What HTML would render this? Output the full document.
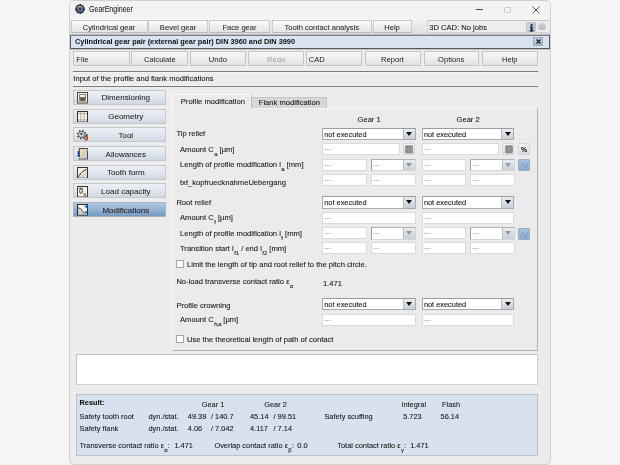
<!DOCTYPE html>
<html><head><meta charset="utf-8"><style>
*{margin:0;padding:0;box-sizing:border-box}
html,body{width:620px;height:465px;overflow:hidden;background:#f5f5f5;font-family:"Liberation Sans",sans-serif;color:#161616}
#root{position:absolute;left:0;top:0;width:620px;height:465px;will-change:transform;overflow:hidden}
.a{position:absolute}
.t{position:absolute;white-space:nowrap;font-size:7.6px;line-height:10px;-webkit-text-stroke:0.08px currentColor;}
.cmb{-webkit-text-stroke:0.08px currentColor;}
.nav{-webkit-text-stroke:0.05px currentColor}
.tab{position:absolute;top:20px;height:13px;border:1px solid #c9c9c9;border-bottom-color:#b9b9b9;background:linear-gradient(#fbfbfb,#e4e4e4);text-align:center;font-size:7.6px;line-height:13px;color:#1e1e1e;-webkit-text-stroke:0.04px currentColor}
.btn{position:absolute;top:51.3px;height:15px;border:1px solid #c4c4c4;border-radius:1px;background:linear-gradient(#f7f7f7,#e3e3e3);font-size:7.6px;line-height:15px;color:#202020;text-align:center}
.nav{position:absolute;left:73px;width:92.6px;height:15px;border:1px solid #c3c8cf;background:linear-gradient(#edf1f6 0%,#dde4ec 60%,#cfd7e1 100%);font-size:8px;line-height:14px;color:#1c1c1c}
.nav span{position:absolute;left:13px;right:0;text-align:center}
.nav.sel{background:linear-gradient(#b3cbe3,#7599c0);border-color:#a9b3be}
.ico{position:absolute;left:3px;top:1px}
.fld{position:absolute;height:12px;background:#fff;border:1px solid #dadada;font-size:6.6px;line-height:10.5px;color:#8f8f8f;padding-left:1.3px;letter-spacing:0px}
.cmb{position:absolute;height:12.5px;background:#fff;border:1px solid #aaaaaa;border-top-color:#9c9c9c;font-size:7.4px;line-height:11px;color:#111;padding-left:1.2px}
.cmb .ar{position:absolute;right:0;top:0;width:12px;height:10.5px;background:linear-gradient(#e9edf2,#c8d0da);border-left:1px solid #b3bcc7}
.cmb .ar:after{content:"";position:absolute;left:2.5px;top:3px;border-left:3.5px solid transparent;border-right:3.5px solid transparent;border-top:4px solid #111}
.cmb.dis{border-color:#b4b4b4 #d6d6d6 #d6d6d6 #9c9c9c;color:#8f8f8f;font-size:6.6px;line-height:10.5px;padding-left:1.3px;-webkit-text-stroke:0}
.cmb.dis .ar:after{border-top-color:#8f99a6}
.sq{position:absolute;width:12px;height:12px;border:1px solid #d2d6db;border-radius:1px;background:linear-gradient(#f3f5f7,#d5dbe2)}
.chk{position:absolute;width:7.5px;height:7.5px;border:1px solid #a5a5a5;background:#fff}
sub{font-size:5.9px;vertical-align:-4px;line-height:0;margin-left:0.4px}
</style></head><body><div id="root">
<div class="a" style="left:69px;top:0;width:482px;height:465px;border:1px solid #d0d0d0;border-radius:5px;background:#ececec;overflow:hidden"><div class="a" style="left:0;top:0;width:480px;height:20px;background:#f3f3f3"></div><div class="a" style="left:0;top:20px;width:480px;height:14px;background:linear-gradient(#efefef,#dfdfdf)"></div></div>
<svg class="a" style="left:75px;top:4px" width="10" height="10" viewBox="0 0 10 10">
<rect x="0" y="0" width="10" height="10" fill="#dfe7f2"/>
<circle cx="5" cy="5" r="4.6" fill="#2b2b2d"/>
<path d="M5 0.2l0.9 1.2M5 9.8l0.9-1.2M0.2 5l1.2 0.9M9.8 5l-1.2 0.9" stroke="#2b2b2d" stroke-width="1.2"/>
<circle cx="5" cy="5" r="3.2" fill="#6e747c"/>
<path d="M2.6 3.2 Q5 1.6 7.4 3.2" stroke="#b8bcc2" stroke-width="0.9" fill="none"/>
<path d="M2.5 6.2 Q5 9 7.5 6.2 L6 5.2 L4 5.2z" fill="#2f66c4"/>
<circle cx="5" cy="4.6" r="0.9" fill="#1e1e1e"/>
</svg>
<div class="t" style="left:88.5px;top:4.1px;font-size:8.8px;color:#262626;transform:scaleX(0.80);transform-origin:0 0">GearEngineer</div>
<div class="a" style="left:476px;top:9px;width:6.5px;height:1px;background:#444"></div>
<div class="a" style="left:504px;top:6.5px;width:6.5px;height:6.5px;border:1px solid #cfcfcf;border-radius:1px"></div>
<svg class="a" style="left:532px;top:6px" width="8" height="8" viewBox="0 0 8 8"><path d="M0.6 0.6L7.4 7.4M7.4 0.6L0.6 7.4" stroke="#3a3a3a" stroke-width="0.85"/></svg>
<div class="tab" style="left:70.5px;width:77px">Cylindrical gear</div>
<div class="tab" style="left:148px;width:60px">Bevel gear</div>
<div class="tab" style="left:209px;width:61px">Face gear</div>
<div class="tab" style="left:271.5px;width:100.5px">Tooth contact analysis</div>
<div class="tab" style="left:372.5px;width:39px">Help</div>
<div class="a" style="left:427px;top:20px;width:122px;height:13px;border:1px solid #d2d2d2;border-top-color:#c6c6c6;border-right:none;background:#ededed"></div>
<div class="t" style="left:429.2px;top:23px;">3D CAD: No jobs</div>
<div class="a" style="left:526px;top:22.3px;width:9.5px;height:9.5px;background:linear-gradient(90deg,#d0dcea,#a8bcd6);border:1px solid #b9c6d6;border-radius:1px"></div>
<svg class="a" style="left:526.5px;top:22.5px" width="9" height="9" viewBox="0 0 9 9"><circle cx="4.6" cy="1.9" r="1" fill="#111"/><path d="M2.9 3.6h2.6v3.9h1.1v0.9H2.6V7.5h1.1V4.5h-0.8z" fill="#111"/></svg>
<div class="a" style="left:538px;top:22.7px;width:7.8px;height:7.8px;border-radius:50%;background:linear-gradient(#d4d4d4,#b9b9b9)"></div>
<div class="a" style="left:70px;top:33.6px;width:480px;height:1.4px;background:#b9b9b9"></div>
<div class="a" style="left:70px;top:35px;width:480px;height:14px;border:1px solid #54585f;border-top-color:#7d8187;background:#d9e4f0"></div>
<div class="a" style="left:70px;top:48.5px;width:480px;height:0.8px;background:#c4c4c4"></div>
<div class="t" style="left:75px;top:36.8px;font-weight:bold;font-size:7.35px;color:#101010;-webkit-text-stroke:0">Cylindrical gear pair (external gear pair) DIN 3960 and DIN 3990</div>
<div class="a" style="left:533px;top:37.3px;width:10px;height:9px;background:linear-gradient(#c4d2e3,#aebfd3);border:1px solid #9aabc0"></div>
<svg class="a" style="left:535.5px;top:39.3px" width="5" height="5" viewBox="0 0 5 5"><path d="M0.5 0.5L4.5 4.5M4.5 0.5L0.5 4.5" stroke="#1a1a1a" stroke-width="1.15"/></svg>
<div class="btn" style="left:73.3px;width:56.5px;text-align:left;padding-left:2px">File</div>
<div class="btn" style="left:131.3px;width:57px;">Calculate</div>
<div class="btn" style="left:189.7px;width:56.3px;">Undo</div>
<div class="btn" style="left:248.3px;width:55.8px;color:#9c9c9c">Redo</div>
<div class="btn" style="left:305.8px;width:56.2px;text-align:left;padding-left:2px">CAD</div>
<div class="btn" style="left:364.5px;width:56px;">Report</div>
<div class="btn" style="left:423.7px;width:55px;">Options</div>
<div class="btn" style="left:482px;width:55.5px;">Help</div>
<div class="a" style="left:73px;top:70.8px;width:465px;height:1.2px;background:#7c7c7c"></div>
<div class="a" style="left:73px;top:72px;width:465px;height:1px;background:#f4f4f4"></div>
<div class="t" style="left:73.3px;top:73.8px;">Input of the profile and flank modifications</div>
<div class="a" style="left:73px;top:84.6px;width:465px;height:1px;background:#f4f4f4"></div>
<div class="a" style="left:73px;top:85.6px;width:465px;height:1.2px;background:#7c7c7c"></div>
<div class="nav" style="top:89.9px"><svg class="ico" style="left:3px;top:1.2px" width="11" height="11.5" viewBox="0 0 11 11.5"><rect x="0.5" y="0.5" width="10" height="10.5" fill="#efeee4" stroke="#4d4c48" stroke-width="1"/>
<rect x="2" y="2" width="7" height="7.5" fill="#8c8474"/><rect x="3" y="3" width="5" height="2" fill="#f5f3ea"/>
<path d="M3 6.3h5M3 8h5M4.7 5.5v3.5M6.3 5.5v3.5" stroke="#4a453c" stroke-width="0.7"/></svg><span style="top:0.6px">Dimensioning</span></div>
<div class="nav" style="top:108.6px"><svg class="ico" style="left:3px;top:1.2px" width="11" height="11.5" viewBox="0 0 11 11.5"><rect x="0.5" y="0.5" width="10" height="10.5" fill="#f7f5e6" stroke="#333" stroke-width="1"/>
<path d="M3.8 1v9.5M7.2 1v9.5M1 2.6h9M1 8.9h9" stroke="#a08c8c" stroke-width="0.7"/></svg><span style="top:0.6px">Geometry</span></div>
<div class="nav" style="top:127.3px"><svg class="ico" style="left:3px;top:1.2px" width="11" height="11.5" viewBox="0 0 11 11.5"><g transform="translate(4.6 5.5)"><circle r="4" fill="none" stroke="#3a3a3a" stroke-width="1.6" stroke-dasharray="1.4 1.74"/>
<circle r="3.4" fill="#6a6a6a"/><circle r="2.6" fill="#dcdcd4"/><path d="M-2.2 1.2 A2.6 2.6 0 0 0 2.2 1.2" fill="none" stroke="#8a8a8a" stroke-width="0.8"/><circle cx="-0.2" cy="-0.5" r="1.1" fill="#262626"/></g>
<rect x="7.6" y="5" width="3" height="6.2" fill="#4a3a4a"/><rect x="8.7" y="6.5" width="1.9" height="4.7" fill="#d24a1a"/><rect x="7.6" y="4.6" width="1.6" height="1.8" fill="#8fb0e0"/><rect x="8" y="8" width="1" height="2.2" fill="#e8c060"/></svg><span style="top:0.6px">Tool</span></div>
<div class="nav" style="top:146px"><svg class="ico" style="left:3px;top:1.2px" width="11" height="11.5" viewBox="0 0 11 11.5"><rect x="2.2" y="0.5" width="8.3" height="10.5" fill="#d9c8b0" stroke="#3a3a3a" stroke-width="0.9"/>
<rect x="3" y="1.2" width="3.5" height="9" fill="#f0d8a8"/><rect x="6.5" y="1.2" width="3.5" height="9" fill="#d8c8d8"/>
<path d="M3 10.3 L10 1.3" stroke="#e8e8e0" stroke-width="2.2"/><path d="M3 10.3 L10 1.3" stroke="#6a6a60" stroke-width="0.5"/>
<rect x="0.6" y="3" width="2" height="6" fill="#1d4c90"/><path d="M0.6 3 L1.6 0.8 L2.6 3z" fill="#c8a868"/><rect x="0.6" y="9" width="2" height="1.2" fill="#e0e0d8"/></svg><span style="top:0.6px">Allowances</span></div>
<div class="nav" style="top:164.7px"><svg class="ico" style="left:3px;top:1.2px" width="11" height="11.5" viewBox="0 0 11 11.5"><rect x="0.5" y="0.5" width="10" height="10.5" fill="#f3f1e2" stroke="#333" stroke-width="1"/>
<path d="M1.5 10 Q3 5 9.8 2.2" fill="none" stroke="#555" stroke-width="1"/><path d="M2.6 7.2l1.4 0.6M4 5.2l1.2 1M5.8 3.8l0.9 1.2M7.8 2.9l0.6 1.3" stroke="#555" stroke-width="0.9"/>
<path d="M2.5 10.5 Q5 6 10 4.5 V10.5z" fill="#d8d8d0"/></svg><span style="top:0.6px">Tooth form</span></div>
<div class="nav" style="top:183.4px"><svg class="ico" style="left:3px;top:1.2px" width="11" height="11.5" viewBox="0 0 11 11.5"><rect x="0.5" y="0.5" width="10" height="10.5" fill="#f3f1e2" stroke="#3a3a3a" stroke-width="1"/>
<path d="M2 2.3h4M3.8 2.3 Q1.8 4.5 3 7 Q4.5 8.5 5.5 6 Q5.8 3.6 3.8 2.3" fill="none" stroke="#404040" stroke-width="0.9"/><path d="M6.5 7.5l2.6 2.2M9.1 7.5l-2.6 2.2" stroke="#404040" stroke-width="0.9"/></svg><span style="top:0.6px">Load capacity</span></div>
<div class="nav sel" style="top:202px"><svg class="ico" style="left:3px;top:1.2px" width="11" height="11.5" viewBox="0 0 11 11.5"><rect x="0.5" y="0.5" width="10" height="10.5" fill="#f4f3ea" stroke="#2a2a2a" stroke-width="1"/>
<path d="M1 4 Q5 4.5 6.5 9 L10 9 V10.5 H1z" fill="#cfcfc8"/><path d="M1.2 3.6 Q5.2 4.6 6.8 9" fill="none" stroke="#333" stroke-width="0.8"/>
<path d="M6.8 9h2.5" stroke="#777" stroke-width="0.6"/>
<circle cx="9" cy="2.6" r="1.3" fill="#2a7ae0"/><circle cx="9" cy="8.3" r="1.3" fill="#2a7ae0"/></svg><span style="top:0.9px">Modifications</span></div>
<div class="a" style="left:172px;top:108px;width:366px;height:243px;border:1px solid #f6f6f6;border-right-color:#b5b5b5;border-bottom-color:#b0b0b0;background:#ebebeb"></div>
<div class="a" style="left:172px;top:94.3px;width:79.5px;height:14.5px;border:1px solid #fafafa;border-bottom:none;border-right-color:#c8c8c8;background:#ebebeb"></div>
<div class="t" style="left:180.8px;top:96.6px;">Profile modification</div>
<div class="a" style="left:251px;top:97px;width:76px;height:11px;border:1px solid #c6c6c6;border-left-color:#bdbdbd;border-bottom:none;background:#d7d7d7"></div>
<div class="t" style="left:258.8px;top:98.3px;">Flank modification</div>
<div class="t" style="left:357.5px;top:114.5px;">Gear 1</div>
<div class="t" style="left:456.5px;top:114.5px;">Gear 2</div>
<div class="t" style="left:176.4px;top:129.4px;">Tip relief</div>
<div class="cmb" style="left:322px;top:127.6px;width:93.5px">not executed<div class="ar"></div></div>
<div class="cmb" style="left:421.7px;top:127.6px;width:92.8px">not executed<div class="ar"></div></div>
<div class="t" style="left:180px;top:144.9px;">Amount C<sub>a</sub> [µm]</div>
<div class="fld" style="left:322px;top:143.2px;width:78px;height:12px">---</div>
<div class="sq" style="left:403px;top:143.2px"><svg class="a" style="left:1.4px;top:1px" width="8" height="8.5" viewBox="0 0 8 8.5"><rect x="0.2" y="0.2" width="7.6" height="8" rx="1.2" fill="#8a8a8a"/><path d="M4 1v6.5M0.8 4.2h6.4" stroke="#a4a4a4" stroke-width="0.7"/></svg></div>
<div class="fld" style="left:421.7px;top:143.2px;width:77px;height:12px">---</div>
<div class="sq" style="left:502.3px;top:143.2px"><svg class="a" style="left:1.4px;top:1px" width="8" height="8.5" viewBox="0 0 8 8.5"><rect x="0.2" y="0.2" width="7.6" height="8" rx="1.2" fill="#8a8a8a"/><path d="M4 1v6.5M0.8 4.2h6.4" stroke="#a4a4a4" stroke-width="0.7"/></svg></div>
<div class="sq" style="left:517.6px;top:143.2px"><div class="t" style="left:2px;top:0.8px;font-weight:bold;font-size:8px;color:#111;transform:scaleX(0.85);transform-origin:0 0">%</div></div>
<div class="t" style="left:180px;top:160.4px;">Length of profile modification l<sub>a</sub> [mm]</div>
<div class="fld" style="left:322px;top:158.5px;width:45px;height:12px">---</div>
<div class="cmb dis" style="left:370.5px;top:158.5px;width:45px">---<div class="ar"></div></div>
<div class="fld" style="left:421.7px;top:158.5px;width:44.3px;height:12px">---</div>
<div class="cmb dis" style="left:470px;top:158.5px;width:44.5px">---<div class="ar"></div></div>
<div class="sq" style="left:518px;top:159px;background:linear-gradient(#a8c0dc,#8eabcf);border-color:#98aec8"><svg class="a" style="left:1px;top:1px" width="9" height="9" viewBox="0 0 9 9"><path d="M1.5 5.5 L4 2 M4 7.5 L7.5 2.5 M6 8 L7.5 6" stroke="#6f8fb4" stroke-width="0.9"/></svg></div>
<div class="t" style="left:180px;top:178.4px;">txt_kopfruecknahmeUebergang</div>
<div class="fld" style="left:322px;top:174.2px;width:45px;height:12px">---</div>
<div class="fld" style="left:370.5px;top:174.2px;width:45px;height:12px">---</div>
<div class="fld" style="left:421.7px;top:174.2px;width:44.3px;height:12px">---</div>
<div class="fld" style="left:470px;top:174.2px;width:44.5px;height:12px">---</div>
<div class="t" style="left:176.4px;top:198.0px;">Root relief</div>
<div class="cmb" style="left:322px;top:196.1px;width:93.5px">not executed<div class="ar"></div></div>
<div class="cmb" style="left:421.7px;top:196.1px;width:92.8px">not executed<div class="ar"></div></div>
<div class="t" style="left:180px;top:212.7px;">Amount C<sub>f</sub> [µm]</div>
<div class="fld" style="left:322px;top:211.5px;width:93.5px;height:12px">---</div>
<div class="fld" style="left:421.7px;top:211.5px;width:92.8px;height:12px">---</div>
<div class="t" style="left:180px;top:229.0px;">Length of profile modification l<sub>f</sub> [mm]</div>
<div class="fld" style="left:322px;top:227.2px;width:45px;height:12px">---</div>
<div class="cmb dis" style="left:370.5px;top:227.2px;width:45px">---<div class="ar"></div></div>
<div class="fld" style="left:421.7px;top:227.2px;width:44.3px;height:12px">---</div>
<div class="cmb dis" style="left:470px;top:227.2px;width:44.5px">---<div class="ar"></div></div>
<div class="sq" style="left:518px;top:227.5px;background:linear-gradient(#a8c0dc,#8eabcf);border-color:#98aec8"><svg class="a" style="left:1px;top:1px" width="9" height="9" viewBox="0 0 9 9"><path d="M1.5 5.5 L4 2 M4 7.5 L7.5 2.5 M6 8 L7.5 6" stroke="#6f8fb4" stroke-width="0.9"/></svg></div>
<div class="t" style="left:180px;top:244.4px;">Transition start l<sub>f1</sub> / end l<sub>f2</sub> [mm]</div>
<div class="fld" style="left:322px;top:242.3px;width:45px;height:12px">---</div>
<div class="fld" style="left:370.5px;top:242.3px;width:45px;height:12px">---</div>
<div class="fld" style="left:421.7px;top:242.3px;width:44.3px;height:12px">---</div>
<div class="fld" style="left:470px;top:242.3px;width:44.5px;height:12px">---</div>
<div class="chk" style="left:176.4px;top:260.4px"></div>
<div class="t" style="left:187px;top:260.2px;">Limit the length of tip and root relief to the pitch circle.</div>
<div class="t" style="left:176.4px;top:276.6px;">No-load transverse contact ratio ε<sub>α</sub></div>
<div class="t" style="left:322.9px;top:278.6px;">1.471</div>
<div class="t" style="left:176.4px;top:300.7px;">Profile crowning</div>
<div class="cmb" style="left:322px;top:297.8px;width:93.5px">not executed<div class="ar"></div></div>
<div class="cmb" style="left:421.7px;top:297.8px;width:92.8px">not executed<div class="ar"></div></div>
<div class="t" style="left:180px;top:315.4px;">Amount C<sub style="letter-spacing:-0.4px">h,a</sub> [µm]</div>
<div class="fld" style="left:322px;top:314px;width:93.5px;height:12px">---</div>
<div class="fld" style="left:421.7px;top:314px;width:92.8px;height:12px">---</div>
<div class="chk" style="left:176.4px;top:335.2px"></div>
<div class="t" style="left:187px;top:334.8px;">Use the theoretical length of path of contact</div>
<div class="a" style="left:76px;top:354px;width:462px;height:31px;background:#fff;border:1px solid #c4c4c4;border-right-color:#d2d2d2;border-bottom-color:#d2d2d2"></div>
<div class="a" style="left:76px;top:394px;width:462px;height:62px;background:#d8e2ee;border:1px solid #b9c3cf"></div>
<div class="t" style="left:79.6px;top:397.5px;font-weight:bold;font-size:7.3px">Result:</div>
<div class="t" style="left:201.7px;top:399.7px;font-size:7.4px;">Gear 1</div>
<div class="t" style="left:264.2px;top:399.7px;font-size:7.4px;">Gear 2</div>
<div class="t" style="left:401.4px;top:399.7px;font-size:7.4px;">Integral</div>
<div class="t" style="left:442px;top:399.7px;font-size:7.4px;">Flash</div>
<div class="t" style="left:79.6px;top:412.2px;font-size:7.4px;">Safety tooth root</div>
<div class="t" style="left:148.5px;top:412.2px;font-size:7.4px;">dyn./stat.</div>
<div class="t" style="left:187.8px;top:412.2px;font-size:7.4px;">49.39</div>
<div class="t" style="left:211px;top:412.2px;font-size:7.4px;">/ 140.7</div>
<div class="t" style="left:250px;top:412.2px;font-size:7.4px;">45.14</div>
<div class="t" style="left:273.5px;top:412.2px;font-size:7.4px;">/ 99.51</div>
<div class="t" style="left:79.6px;top:424px;font-size:7.4px;">Safety flank</div>
<div class="t" style="left:148.5px;top:424px;font-size:7.4px;">dyn./stat.</div>
<div class="t" style="left:187.8px;top:424px;font-size:7.4px;">4.06</div>
<div class="t" style="left:211px;top:424px;font-size:7.4px;">/ 7.042</div>
<div class="t" style="left:250px;top:424px;font-size:7.4px;">4.117</div>
<div class="t" style="left:273.5px;top:424px;font-size:7.4px;">/ 7.14</div>
<div class="t" style="left:324.4px;top:412.2px;font-size:7.4px;">Safety scuffing</div>
<div class="t" style="left:403.2px;top:412.2px;font-size:7.4px;">5.723</div>
<div class="t" style="left:440.6px;top:412.2px;font-size:7.4px;">56.14</div>
<div class="t" style="left:79.6px;top:440.5px;font-size:7.4px;">Transverse contact ratio ε<sub>α</sub>:</div>
<div class="t" style="left:174.4px;top:440.5px;font-size:7.4px;">1.471</div>
<div class="t" style="left:214.4px;top:440.5px;font-size:7.4px;">Overlap contact ratio ε<sub>β</sub>:</div>
<div class="t" style="left:297.3px;top:440.5px;font-size:7.4px;">0.0</div>
<div class="t" style="left:337.3px;top:440.5px;font-size:7.4px;">Total contact ratio ε<sub>γ</sub>:</div>
<div class="t" style="left:410.2px;top:440.5px;font-size:7.4px;">1.471</div>
</div></body></html>
